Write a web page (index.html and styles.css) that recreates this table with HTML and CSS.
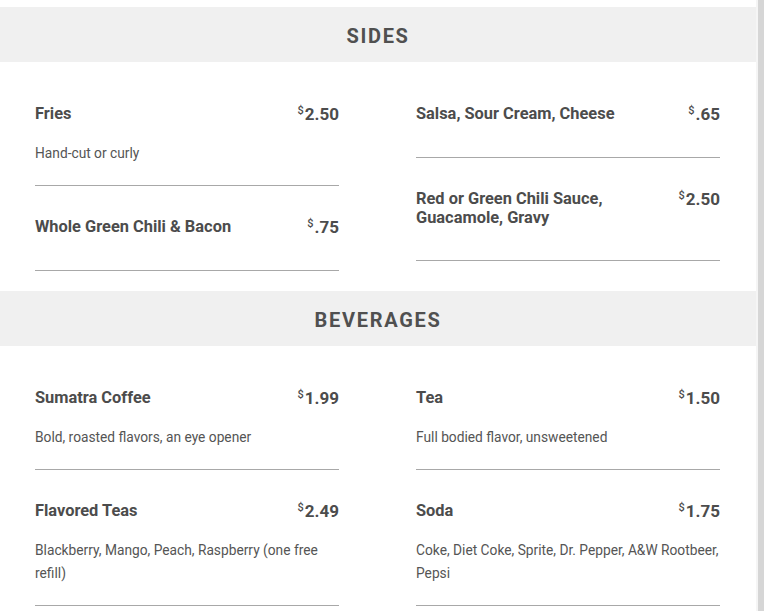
FILE: index.html
```html
<!DOCTYPE html>
<html>
<head>
<meta charset="utf-8">
<link rel="stylesheet" href="styles.css">
</head>
<body>
<div class="page">
  <main class="menu">
    <section class="section">
      <h2 class="band">SIDES</h2>
      <div class="grid">
        <div class="col">
          <div class="item">
            <div class="row"><span class="name">Fries</span><span class="price"><sup>$</sup>2.50</span></div>
            <div class="desc">Hand-cut or curly</div>
          </div>
          <div class="item">
            <div class="row"><span class="name">Whole Green Chili &amp; Bacon</span><span class="price"><sup>$</sup>.75</span></div>
          </div>
        </div>
        <div class="col">
          <div class="item">
            <div class="row"><span class="name">Salsa, Sour Cream, Cheese</span><span class="price"><sup>$</sup>.65</span></div>
          </div>
          <div class="item">
            <div class="row"><span class="name">Red or Green Chili Sauce,<br>Guacamole, Gravy</span><span class="price"><sup>$</sup>2.50</span></div>
          </div>
        </div>
      </div>
    </section>
    <section class="section">
      <h2 class="band">BEVERAGES</h2>
      <div class="grid">
        <div class="col">
          <div class="item">
            <div class="row"><span class="name">Sumatra Coffee</span><span class="price"><sup>$</sup>1.99</span></div>
            <div class="desc">Bold, roasted flavors, an eye opener</div>
          </div>
          <div class="item">
            <div class="row"><span class="name">Flavored Teas</span><span class="price"><sup>$</sup>2.49</span></div>
            <div class="desc">Blackberry, Mango, Peach, Raspberry (one free refill)</div>
          </div>
        </div>
        <div class="col">
          <div class="item">
            <div class="row"><span class="name">Tea</span><span class="price"><sup>$</sup>1.50</span></div>
            <div class="desc">Full bodied flavor, unsweetened</div>
          </div>
          <div class="item">
            <div class="row"><span class="name">Soda</span><span class="price"><sup>$</sup>1.75</span></div>
            <div class="desc">Coke, Diet Coke, Sprite, Dr. Pepper, A&amp;W Rootbeer, Pepsi</div>
          </div>
        </div>
      </div>
    </section>
  </main>
  <div class="gutter"></div>
</div>
</body>
</html>
```
FILE: styles.css
```css
html, body {
  margin: 0;
  padding: 0;
  background: #ffffff;
}
body {
  font-family: Roboto, "Liberation Sans", Arial, sans-serif;
  color: #4f4f4f;
  overflow: hidden;
}
.page {
  display: flex;
  height: 611px;
}
.menu {
  flex: none;
  width: 758px;
  padding-top: 7px;
  border-right: 2px solid #f5f5f5;
  box-sizing: border-box;
}
.gutter {
  flex: 1;
  background: #d6d6d6;
}
.section {
  padding-bottom: 20px;
}
.band {
  margin: 0;
  height: 55px;
  box-sizing: border-box;
  padding-top: 3px;
  line-height: 52px;
  background: #f0f0f0;
  text-align: center;
  font-size: 20px;
  font-weight: 700;
  letter-spacing: 1.7px;
  color: #505050;
}
.grid {
  display: grid;
  grid-template-columns: 304px 304px;
  column-gap: 77px;
  padding: 11px 35px 0;
  align-items: start;
}
.item {
  padding: 31px 0 19px;
  border-bottom: 1px solid #a8a8a8;
}
.row {
  display: flex;
  justify-content: space-between;
  align-items: flex-start;
  margin-bottom: 14px;
}
.name {
  font-size: 16.4px;
  line-height: 19px;
  font-weight: 700;
  color: #4c4c4c;
}
.price {
  font-size: 17px;
  line-height: 20px;
  font-weight: 700;
  color: #4c4c4c;
  white-space: nowrap;
  margin-left: 12px;
}
.price sup {
  font-size: 11px;
  font-weight: 500;
  vertical-align: top;
  line-height: 11px;
  margin-right: 1px;
  position: relative;
  top: 1px;
}
.desc {
  margin-top: 18px;
  margin-bottom: 1px;
  font-size: 13.75px;
  line-height: 23px;
  color: #555555;
}
```
